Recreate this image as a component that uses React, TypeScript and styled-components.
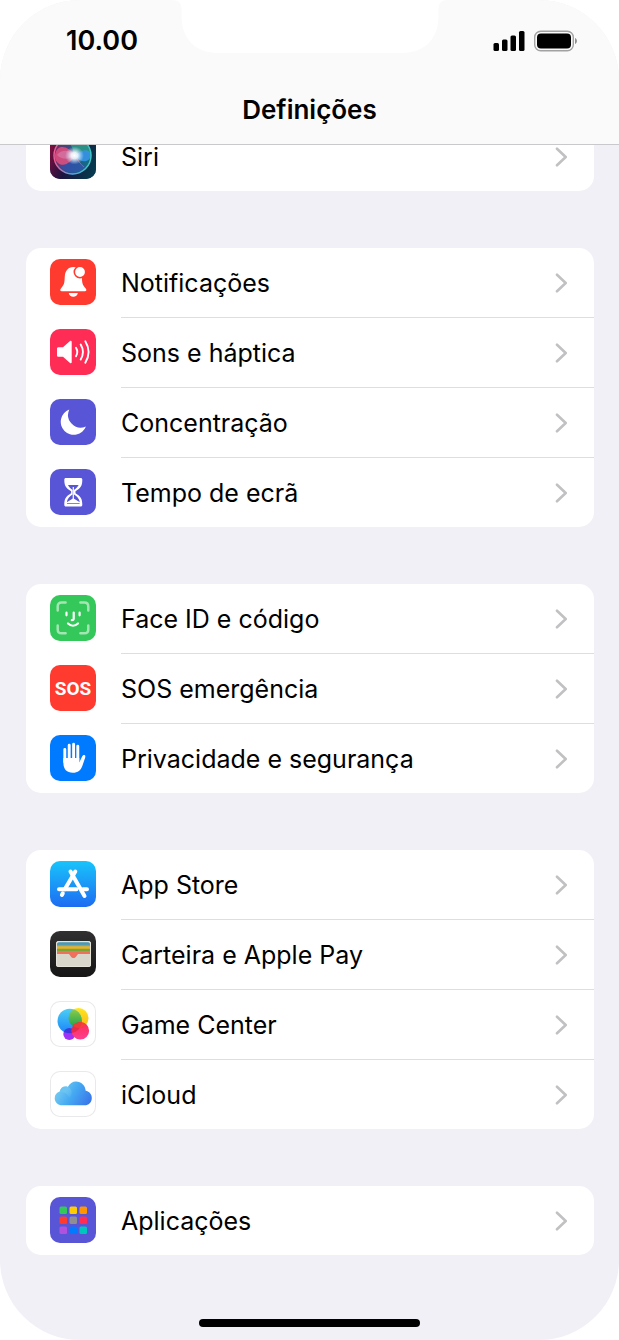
import React from "react";
import styled, { createGlobalStyle } from "styled-components";

const GlobalStyle = createGlobalStyle`
  *, *::before, *::after { box-sizing: border-box; }
  body {
    margin: 0;
    background: #ffffff;
    color: #000000;
    font-family: Inter, "Liberation Sans", sans-serif;
  }
`;

const Screen = styled.div`
  position: relative;
  display: flex;
  flex-direction: column;
  min-height: 100vh;
  overflow: hidden;
  border-radius: 80px;
  background: #f1f0f6;
`;

const Header = styled.header`
  position: relative;
  z-index: 1;
  display: flex;
  flex-direction: column;
  height: 145px;
  background: #fafafa;
  border-bottom: 1px solid #c9c9cc;
`;

const Notch = styled.svg`
  position: absolute;
  top: 0;
  left: 50%;
  transform: translateX(-50%);
`;

const StatusBar = styled.div`
  display: flex;
  align-items: center;
  justify-content: space-between;
  height: 82px;
  padding: 0 41px 0 66px;
`;

const Time = styled.time`
  font-size: 27px;
  line-height: 32px;
  font-weight: 600;
`;

const StatusIcons = styled.div`
  display: flex;
  align-items: center;
  gap: 9px;
`;

const Title = styled.h1`
  margin: 0;
  font-size: 26px;
  line-height: 56px;
  font-weight: 600;
  text-align: center;
`;

const Main = styled.main`
  display: flex;
  flex-direction: column;
  flex: 1;
  gap: 57px;
  margin-top: -23px;
  padding: 0 25px 0 26px;
`;

const Group = styled.ul`
  margin: 0;
  padding: 0;
  list-style: none;
  overflow: hidden;
  border-radius: 15px;
  background: #ffffff;
`;

const Item = styled.li`
  & + & a > span { box-shadow: 0 -1px #dedee0; }
  & + & { padding-top: 1px; }
`;

const RowLink = styled.a`
  display: flex;
  align-items: stretch;
  gap: 25px;
  height: 69px;
  padding-left: 24px;
  color: inherit;
  text-decoration: none;
`;

const RowBody = styled.span`
  display: flex;
  flex: 1;
  align-items: center;
  justify-content: space-between;
  padding-right: 26px;
  font-size: 25px;
  line-height: 32px;
`;

const Tile = styled.i<{ $bg: string; $outlined?: boolean }>`
  display: flex;
  align-items: center;
  justify-content: center;
  flex: none;
  width: 46px;
  height: 46px;
  margin-top: 11px;
  overflow: hidden;
  border-radius: 10px;
  background: ${(p) => p.$bg};
  box-shadow: ${(p) => (p.$outlined ? "inset 0 0 0 1px #e9e9eb" : "none")};
`;

const SosText = styled.b`
  color: #ffffff;
  font: bold 19px Roboto, sans-serif;
`;

const HomeArea = styled.footer`
  display: flex;
  justify-content: center;
  padding: 64px 0 13px;
`;

const HomeBar = styled.div`
  width: 221px;
  height: 8px;
  border-radius: 4px;
  background: #000000;
`;

const Art = ({ children }: { children: React.ReactNode }) => (
  <svg width="46" height="46" viewBox="0 0 46 46" fill="none" aria-hidden="true">
    {children}
  </svg>
);

const Siri = () => (
  <Art>
    <defs>
      <linearGradient id="siriBg" x1="0" y1="0.3" x2="1" y2="0.7">
        <stop offset="0" stopColor="#7d0f3d" />
        <stop offset="0.45" stopColor="#1c1440" />
        <stop offset="1" stopColor="#063a4e" />
      </linearGradient>
      <linearGradient id="siriOrb" x1="0" y1="0.4" x2="1" y2="0.6">
        <stop offset="0" stopColor="#7c2a63" />
        <stop offset="0.5" stopColor="#23578c" />
        <stop offset="1" stopColor="#12707f" />
      </linearGradient>
      <radialGradient id="siriGlow">
        <stop offset="0" stopColor="#ffffff" />
        <stop offset="0.35" stopColor="#f4fbff" stopOpacity="0.9" />
        <stop offset="1" stopColor="#cdeaff" stopOpacity="0" />
      </radialGradient>
      <linearGradient id="siriRing" x1="0" y1="0" x2="1" y2="0">
        <stop offset="0" stopColor="#ee5c94" />
        <stop offset="0.45" stopColor="#5d9ee0" />
        <stop offset="1" stopColor="#3fc8c4" />
      </linearGradient>
    </defs>
    <path fill="url(#siriBg)" d="M0 0h46v46H0z" />
    <circle cx="22.500" cy="22.500" r="19" fill="url(#siriOrb)" />
    <path fill="#2f9c86" fillOpacity=".8" d="M15 6c10-5 25 2 26 15-6-4-10-4-17 1-1-8-4-12-9-16z" />
    <path fill="#e2507f" fillOpacity=".85" d="M5 22C7 10 18 13 25 22c-4 9-13 13-18 7-2-2-2-4-2-7z" />
    <path fill="#d679a8" fillOpacity=".7" d="M7 22c5-6 12-5 18 0-6 5-13 5-18 0z" />
    <path fill="#3795e6" fillOpacity=".9" d="M25 23c5-7 15-8 16-1 0 6-9 10-16 1z" />
    <path fill="#3450b4" fillOpacity=".65" d="M9 32c8 1 12-4 16-9 2 6 6 9 11 9-6 10-20 10-27 0z" />
    <path stroke="#b9557f" d="M25 23c3 4 5 8 9 11" />
    <circle cx="22.500" cy="22.500" r="18.500" stroke="url(#siriRing)" strokeWidth="1.400" />
    <ellipse cx="24.500" cy="22.500" rx="9.500" ry="9" fill="url(#siriGlow)" />
  </Art>
);

const Bell = () => (
  <Art>
    <path
      fill="#fff"
      d="M23.300 8C18 8 15.200 12 14.800 17c-.4 5.500 0 8.200-3.500 12-1.700 1.900-1.300 3.300.5 3.300h23c1.800 0 2.200-1.400.5-3.300-3.500-3.800-3.100-6.500-3.500-12C31.400 12 28.600 8 23.300 8zM18.700 34h9.200c-.4 2.400-2.200 3.800-4.600 3.800s-4.200-1.400-4.600-3.800z"
    />
    <circle cx="30" cy="13" r="5.700" fill="#fff" stroke="#ff3b30" strokeWidth="1.600" />
  </Art>
);

const Speaker = () => (
  <Art>
    <path fill="#fff" d="M8.500 18.300H13l7-6.200c.8-.7 1.700-.4 1.700.6v20.600c0 1-.9 1.300-1.700.6l-7-6.200H8.500c-1 0-1.500-.5-1.500-1.500v-6.400c0-1 .5-1.500 1.500-1.500z" />
    <path
      stroke="#fff"
      strokeWidth="1.900"
      strokeLinecap="round"
      d="M26 18.700c1.700 2.800 1.700 5.800 0 8.600M30.700 15.500c3 5 3 10 0 15M35.300 12.300c4.300 7 4.300 14.400 0 21.400"
    />
  </Art>
);

const Moon = () => (
  <Art>
    <path fill="#fff" d="M19.300 10.600A13 13 0 1 0 35.900 27.400A12.600 12.600 0 0 1 19.300 10.600z" />
  </Art>
);

const Hourglass = () => (
  <Art>
    <path
      fill="#fff"
      d="M16 9h14.600c1.100 0 1.700.6 1.700 1.500 0 6.500-1.500 8.500-6.800 11.800v1.900c5.300 3.300 6.800 5.300 6.800 11.800 0 .9-.6 1.500-1.700 1.500H16c-1.100 0-1.700-.6-1.700-1.500 0-6.500 1.500-8.500 6.800-11.800v-1.900c-5.300-3.300-6.800-5.300-6.800-11.800 0-.9.600-1.500 1.700-1.500z"
    />
    <path fill="#5856d6" d="M18 16h10.600c-.8 1.700-2.200 3.200-4.600 5v4.400c3.200 2.200 5.200 4 5.800 7.800l-6.500-4-6.500 4c.6-3.800 2.600-5.600 5.800-7.800V21c-2.400-1.800-3.800-3.300-4.600-5z" />
    <path fill="#5856d6" d="M17 34.200h12.600v.9H17z" />
    <path stroke="#fff" strokeWidth="1.200" d="M23.300 18v12" />
  </Art>
);

const FaceId = () => (
  <Art>
    <path
      stroke="#fff"
      strokeOpacity=".55"
      strokeWidth="2.500"
      strokeLinecap="round"
      d="M7.700 15.500v-4c0-2.700 1.200-3.900 3.900-3.900h4M30.400 7.600h4c2.700 0 3.900 1.200 3.900 3.900v4M38.300 30.400v4c0 2.700-1.200 3.900-3.900 3.900h-4M15.600 38.300h-4c-2.700 0-3.900-1.200-3.900-3.900v-4"
    />
    <path
      stroke="#fff"
      strokeWidth="2.200"
      strokeLinecap="round"
      strokeLinejoin="round"
      d="M16.500 17.700v2.600M29.600 17.700v2.600M23.700 17.500v6c0 1.200-.6 1.700-1.900 1.700M18 28.500c3 2.800 7 2.800 10 0"
    />
  </Art>
);

const Hand = () => (
  <Art>
    <path
      stroke="#fff"
      strokeWidth="2.900"
      strokeLinecap="round"
      d="M14.800 14.500V27M19.200 10.300V25M23.600 9.300V25M27.800 11.300V26"
    />
    <path
      fill="#fff"
      d="M13.400 23h15.900v4.600l2.800-6c.6-1.400 1.500-1.900 2.400-1.500.9.400 1 1.300.7 2.400l-2.800 8.300c-1.500 4.600-4.600 7-9.500 7-6.200 0-9.500-3.800-9.500-9.800z"
    />
  </Art>
);

const AppStore = () => (
  <Art>
    <g stroke="#fff" strokeWidth="4" strokeLinecap="round">
      <path d="M20.500 10.500L34.500 35" />
      <path d="M25.300 10.500L14.800 28.300" />
      <path d="M12.800 32.300L11.900 34" />
      <path d="M9 28.300h17.500M33 28.300h4" />
    </g>
  </Art>
);

const Wallet = () => (
  <Art>
    <rect x="6" y="10" width="35" height="26" rx="2.500" fill="#d9d6cb" />
    <path fill="#4a98b3" d="M7 13.500c0-1.500.8-2.300 2-2.300h29c1.200 0 2 .8 2 2.300v2H7z" />
    <path fill="#6aa9b7" d="M7 13.800h33v2H7z" />
    <path fill="#f2b01e" d="M7 15.200h33v3H7z" />
    <path fill="#74a83c" d="M7 17.800h33v3H7z" />
    <path fill="#f0705c" d="M7 20.300h33V23H29c-1.200 0-1.700.7-2.300 1.700-1.700 3.200-4.700 3.200-6.400 0C19.700 23.700 19.200 23 18 23H7z" />
    <rect x="6.500" y="10.500" width="34" height="25" rx="2" stroke="#e5e3da" />
  </Art>
);

const GameCenter = () => (
  <Art>
    <defs>
      <linearGradient id="gcBlue" x1="0" y1="0" x2="0" y2="1">
        <stop offset="0" stopColor="#4ccff3" />
        <stop offset="1" stopColor="#1a84fb" />
      </linearGradient>
      <linearGradient id="gcYellow" x1="0" y1="0" x2="0" y2="1">
        <stop offset="0" stopColor="#ffe71c" />
        <stop offset="1" stopColor="#f9b51b" />
      </linearGradient>
      <linearGradient id="gcGreen" x1="0" y1="0" x2="0" y2="1">
        <stop offset="0" stopColor="#96cf45" />
        <stop offset="1" stopColor="#13a052" />
      </linearGradient>
      <linearGradient id="gcPink" x1="0" y1="0" x2="0" y2="1">
        <stop offset="0" stopColor="#fb2c50" />
        <stop offset="1" stopColor="#ff3f92" />
      </linearGradient>
      <clipPath id="gcClip"><circle cx="19.700" cy="20" r="12.200" /></clipPath>
      <clipPath id="gcClipPink"><circle cx="30.300" cy="29.800" r="8.800" /></clipPath>
    </defs>
    <circle cx="19.300" cy="33" r="6" fill="#a033f5" />
    <circle cx="28.500" cy="17" r="10" fill="url(#gcYellow)" />
    <circle cx="19.700" cy="20" r="12.200" fill="url(#gcBlue)" />
    <g clipPath="url(#gcClip)">
      <circle cx="28.500" cy="17" r="10" fill="url(#gcGreen)" />
      <circle cx="19.300" cy="33" r="6" fill="#4436df" />
    </g>
    <circle cx="30.300" cy="29.800" r="8.800" fill="url(#gcPink)" />
    <g clipPath="url(#gcClipPink)">
      <circle cx="19.700" cy="20" r="12.200" fill="#d9263f" fillOpacity=".7" />
      <circle cx="28.500" cy="17" r="10" fill="#f2492d" fillOpacity=".6" />
    </g>
  </Art>
);

const Cloud = () => (
  <Art>
    <defs>
      <linearGradient id="cloudFill" x1="0" y1="0.3" x2="1" y2="0.7">
        <stop offset="0" stopColor="#7fd0f0" />
        <stop offset="0.5" stopColor="#45aaf2" />
        <stop offset="1" stopColor="#3a78ea" />
      </linearGradient>
      <linearGradient id="cloudPuff" x1="0" y1="0" x2="1" y2="1">
        <stop offset="0" stopColor="#62c0ee" />
        <stop offset="1" stopColor="#8bd6f5" stopOpacity="0" />
      </linearGradient>
    </defs>
    <path
      fill="url(#cloudFill)"
      d="M12.300 34.300C8 34.300 4.700 31.300 4.700 27.200c0-3.300 1.900-5.700 5-6.600.7-3.100 3-5 5.900-5 .8 0 1.500.1 2.200.4C19.500 12.500 22.500 10.500 26 10.500c5.200 0 9.300 4 9.700 9.300 3.600.7 6.100 3.400 6.100 7.100 0 4.300-3 7.400-7.300 7.400z"
    />
    <path fill="url(#cloudPuff)" d="M9.700 20.600c.7-3.100 3-5 5.900-5 3.400 0 6 2.700 6 6.200 0 2-.9 3.700-2.200 4.800-2-3.800-5.300-6-9.700-6z" />
  </Art>
);

const APP_COLORS = [
  "#34c759", "#ffcc00", "#ff9500",
  "#ff3b30", "#8e8e93", "#ff2d55",
  "#af52de", "#007aff", "#00c7be",
];

const AppGrid = () => (
  <Art>
    {APP_COLORS.map((c, i) => (
      <rect key={c} x={9.5 + (i % 3) * 10} y={9.5 + Math.floor(i / 3) * 10} width="7.500" height="7.500" rx="1.500" fill={c} />
    ))}
  </Art>
);

interface Setting {
  label: string;
  bg: string;
  icon: React.ReactNode;
  outlined?: boolean;
}

const GROUPS: Setting[][] = [
  [{ label: "Siri", bg: "#20466f", icon: <Siri /> }],
  [
    { label: "Notificações", bg: "#ff3b30", icon: <Bell /> },
    { label: "Sons e háptica", bg: "#ff2d55", icon: <Speaker /> },
    { label: "Concentração", bg: "#5856d6", icon: <Moon /> },
    { label: "Tempo de ecrã", bg: "#5856d6", icon: <Hourglass /> },
  ],
  [
    { label: "Face ID e código", bg: "#34c759", icon: <FaceId /> },
    { label: "SOS emergência", bg: "#ff3b30", icon: <SosText>SOS</SosText> },
    { label: "Privacidade e segurança", bg: "#007aff", icon: <Hand /> },
  ],
  [
    { label: "App Store", bg: "linear-gradient(#19c4fb, #1d6cf2)", icon: <AppStore /> },
    { label: "Carteira e Apple Pay", bg: "linear-gradient(#303030, #161616)", icon: <Wallet /> },
    { label: "Game Center", bg: "#ffffff", icon: <GameCenter />, outlined: true },
    { label: "iCloud", bg: "#ffffff", icon: <Cloud />, outlined: true },
  ],
  [{ label: "Aplicações", bg: "#5856d6", icon: <AppGrid /> }],
];

const Chevron = () => (
  <svg width="13" height="20" viewBox="0 0 13 20" fill="none" aria-hidden="true">
    <path d="M2 1.700l8.700 8.300L2 18.300" stroke="#c1c1c3" strokeWidth="2.600" strokeLinecap="round" strokeLinejoin="round" />
  </svg>
);

const Row = ({ label, bg, icon, outlined }: Setting) => (
  <Item>
    <RowLink href="#">
      <Tile $bg={bg} $outlined={outlined} aria-hidden="true">{icon}</Tile>
      <RowBody>
        {label}
        <Chevron />
      </RowBody>
    </RowLink>
  </Item>
);

export default function App() {
  return (
    <>
      <GlobalStyle />
      <Screen>
        <Header>
          <Notch width="277" height="53" viewBox="0 0 277 53" aria-hidden="true">
            <path fill="#fff" d="M0 0c7 0 10 3 10 9v7c0 23 14 37 37 37h183c23 0 37-14 37-37V9c0-6 3-9 10-9z" />
          </Notch>
          <StatusBar>
            <Time>10.00</Time>
            <StatusIcons>
              <svg width="32" height="20" viewBox="0 0 32 20" aria-label="Rede móvel" role="img">
                <rect x="0.500" y="12" width="5.500" height="8" rx="1.500" />
                <rect x="9" y="8.500" width="5.500" height="11.500" rx="1.500" />
                <rect x="17.500" y="4.500" width="5.500" height="15.500" rx="1.500" />
                <rect x="26" y="0" width="5.500" height="20" rx="1.500" />
              </svg>
              <svg width="44" height="22" viewBox="0 0 44 22" fill="none" aria-label="Bateria" role="img">
                <rect x="0.700" y="1.200" width="38.600" height="19.600" rx="6" stroke="#a2a2a4" strokeWidth="1.400" />
                <rect x="3" y="3.500" width="34" height="15" rx="4" fill="#000" />
                <path d="M41 8c2.600 1.300 2.600 4.700 0 6z" fill="#8f8f92" />
              </svg>
            </StatusIcons>
          </StatusBar>
          <Title>Definições</Title>
        </Header>
        <Main>
          {GROUPS.map((rows) => (
            <Group key={rows[0].label}>
              {rows.map((row) => (
                <Row key={row.label} {...row} />
              ))}
            </Group>
          ))}
        </Main>
        <HomeArea>
          <HomeBar />
        </HomeArea>
      </Screen>
    </>
  );
}
